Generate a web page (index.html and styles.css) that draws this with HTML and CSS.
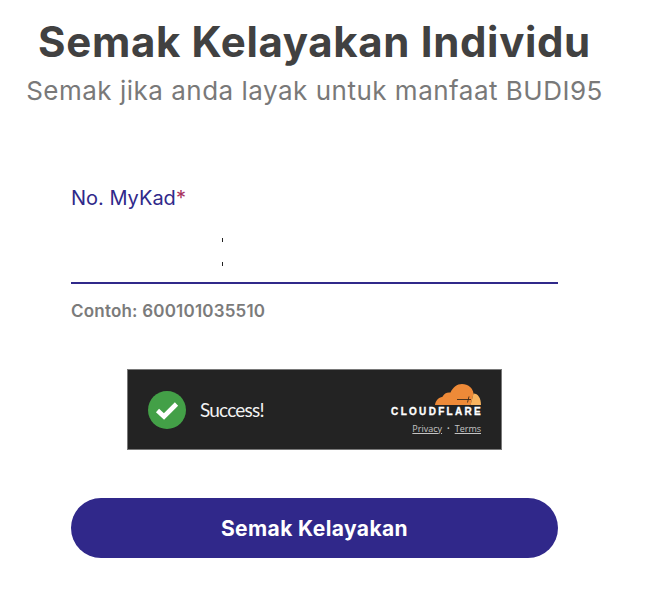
FILE: index.html
```html
<!DOCTYPE html>
<html lang="en">
<head>
    <meta charset="UTF-8">
    <meta name="viewport" content="width=device-width, initial-scale=1.0">
    <title>Semak Kelayakan Individu</title>
    <link rel="stylesheet" href="styles.css">
</head>
<body>
    <div class="page">
        <div class="page-header">
            <h1>Semak Kelayakan Individu</h1>
            <p>Semak jika anda layak untuk manfaat BUDI95</p>
        </div>
        <form class="check-form">
            <label class="field-label">No. MyKad<span class="required">*</span></label>
            <div class="field-input">
                <span class="tick"></span>
                <span class="tick"></span>
            </div>
            <div class="field-hint">Contoh: 600101035510</div>
            <div class="captcha">
                <div class="captcha-status">
                    <svg class="captcha-check" viewBox="0 0 38 38">
                        <circle cx="19" cy="19" r="19" fill="#43a047"/>
                        <path d="M9.500 19.500l6.500 6L28.500 13" fill="none" stroke="#fff" stroke-width="4.600"/>
                    </svg>
                    <span>Success!</span>
                </div>
                <div class="captcha-brand">
                    <svg class="cf-cloud" viewBox="0 0 46 21">
                        <path d="M0 21C.5 16.500 3.500 13.500 7.500 12.700C9 9.500 12 8 15.500 8.500C18 3.200 22 0 27 0C33 0 38 4 38.500 9.500C37.500 14 36.500 18 35.500 21Z" fill="#ee8a38"/>
                        <path d="M35.500 21C36.500 17.500 37.500 13.500 38.500 9.500C43 9.500 46 14 46 21Z" fill="#f8b45e"/>
                        <path d="M22 15.500H36M34 12.500L32.500 18.500" stroke="#3a2a1c" stroke-width="0.900"/>
                    </svg>
                    <div class="cf-name">CLOUDFLARE</div>
                    <div class="cf-links"><a>Privacy</a><i>•</i><a>Terms</a></div>
                </div>
            </div>
            <button class="submit-btn" type="button">Semak Kelayakan</button>
        </form>
    </div>
</body>
</html>
```

FILE: styles.css
```css
* {
    margin: 0;
    padding: 0;
    box-sizing: border-box;
}

body {
    font-family: Inter, "Noto Sans", sans-serif;
    background-color: white;
}

.page {
    width: 629px;
    padding-top: 17px;
}

.page-header {
    text-align: center;
}

.page-header h1 {
    font-size: 42px;
    line-height: 50px;
    font-weight: 700;
    letter-spacing: 0.65px;
    color: #414141;
    white-space: nowrap;
}

.page-header p {
    font-size: 26px;
    line-height: 48px;
    letter-spacing: 0.5px;
    color: #797979;
    white-space: nowrap;
}

.check-form {
    margin: 0 71px;
    padding-top: 69px;
}

.field-label {
    display: block;
    font-size: 20px;
    line-height: 28px;
    color: #30298a;
}

.required {
    color: #a8325e;
}

.field-input {
    height: 72px;
    border-bottom: 2px solid #30298a;
    padding-top: 26px;
    padding-left: 151px;
}

.tick {
    display: block;
    width: 1px;
    height: 4px;
    margin-bottom: 20px;
    background-color: #222;
}

.field-hint {
    margin-top: 14px;
    font-size: 17px;
    line-height: 26px;
    font-weight: 600;
    letter-spacing: 0.2px;
    color: #7b7b7b;
}

.captcha {
    display: flex;
    justify-content: space-between;
    align-items: center;
    width: 375px;
    height: 81px;
    margin: 45px auto 0;
    padding: 0 20px 0 20px;
    background-color: #232323;
    border: 1px solid #797979;
}

.captcha-status {
    display: flex;
    align-items: center;
    gap: 14px;
    color: #f2f2f2;
    font-family: Lato, sans-serif;
    font-size: 19px;
    letter-spacing: -0.8px;
}

.captcha-check {
    width: 38px;
    height: 38px;
}

.captcha-brand {
    display: flex;
    flex-direction: column;
    align-items: flex-end;
}

.cf-cloud {
    width: 46px;
    height: 21px;
}

.cf-name {
    margin-top: 1px;
    margin-right: -2px;
    font-family: "Liberation Sans", sans-serif;
    font-size: 10px;
    line-height: 12px;
    font-weight: 700;
    letter-spacing: 2.3px;
    color: white;
    -webkit-text-stroke: 0.3px white;
}

.cf-links {
    display: flex;
    align-items: center;
    gap: 5px;
    margin-top: 5px;
    font-family: "Open Sans", sans-serif;
    font-size: 9px;
    line-height: 12px;
    color: #c4c4c4;
}

.cf-links a {
    text-decoration: underline;
}

.cf-links i {
    font-style: normal;
    font-size: 7px;
}

.submit-btn {
    display: block;
    width: 487px;
    height: 60px;
    margin-top: 48px;
    border: none;
    border-radius: 30px;
    background-color: #30288a;
    color: white;
    font-family: Inter, "Noto Sans", sans-serif;
    font-size: 21px;
    font-weight: 700;
    letter-spacing: 0.4px;
}
```
